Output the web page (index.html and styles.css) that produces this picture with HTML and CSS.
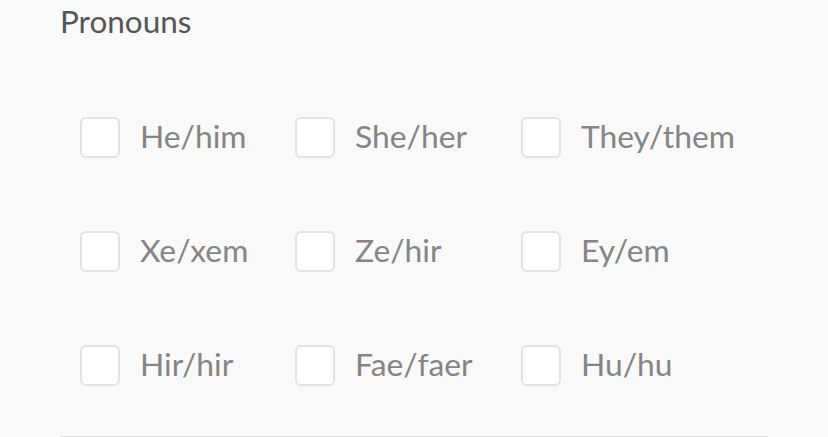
FILE: index.html
```html
<!DOCTYPE html>
<html lang="en">
<head>
<meta charset="utf-8">
<link rel="stylesheet" href="styles.css">
</head>
<body>
<div class="section">
  <h2 class="title">Pronouns</h2>
  <div class="options">
    <label class="option"><span class="box"></span><span class="label">He/him</span></label>
    <label class="option"><span class="box"></span><span class="label">She/her</span></label>
    <label class="option"><span class="box"></span><span class="label">They/them</span></label>
    <label class="option"><span class="box"></span><span class="label">Xe/xem</span></label>
    <label class="option"><span class="box"></span><span class="label">Ze/hir</span></label>
    <label class="option"><span class="box"></span><span class="label">Ey/em</span></label>
    <label class="option"><span class="box"></span><span class="label">Hir/hir</span></label>
    <label class="option"><span class="box"></span><span class="label">Fae/faer</span></label>
    <label class="option"><span class="box"></span><span class="label">Hu/hu</span></label>
  </div>
  <div class="divider"></div>
</div>
</body>
</html>
```

FILE: styles.css
```css
html, body {
  margin: 0;
  padding: 0;
  background: #f9f9f9;
  font-family: Lato, "Open Sans", sans-serif;
}
.section {
  padding: 0 60px;
  width: 708px;
}
.title {
  margin: 0;
  padding-top: 2px;
  font-size: 31.5px;
  font-weight: 400;
  color: #555;
  line-height: 39px;
}
.options {
  display: grid;
  grid-template-columns: 215px 226px auto;
  row-gap: 73px;
  padding: 76px 0 0 20px;
}
.option {
  display: flex;
  align-items: center;
  gap: 20px;
  height: 41px;
}
.box {
  flex: none;
  width: 36px;
  height: 37px;
  border: 2px solid #e2e2e2;
  border-radius: 6px;
  background: #fff;
}
.label {
  font-size: 31.8px;
  line-height: 36px;
  margin-bottom: 4px;
  color: #858585;
  white-space: nowrap;
}
.divider {
  margin-top: 50px;
  height: 1px;
  background: #dcdde0;
}
```
